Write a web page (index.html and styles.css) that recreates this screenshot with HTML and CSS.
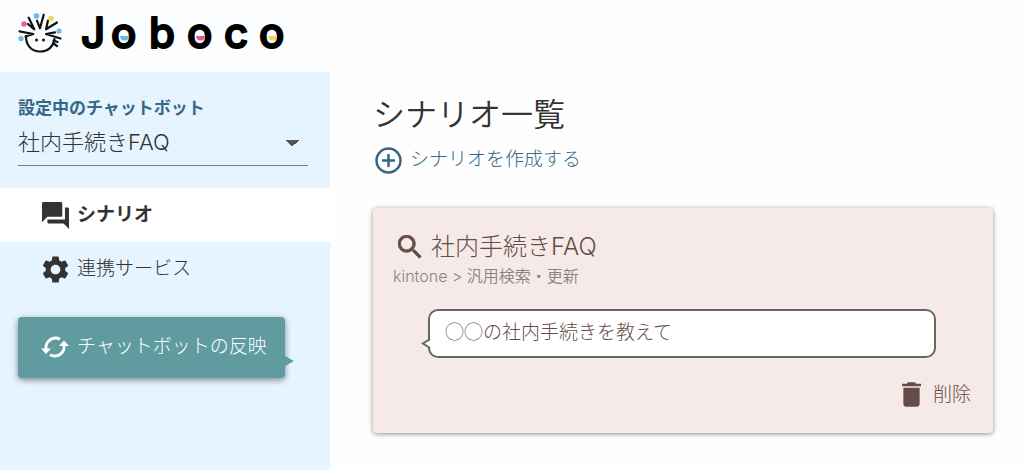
FILE: index.html
```
<!DOCTYPE html>
<html lang="ja">
<head>
<meta charset="UTF-8">
<meta name="viewport" content="width=device-width, initial-scale=1.0">
<title>シナリオ一覧 | Joboco</title>
<link rel="stylesheet" href="styles.css">
</head>
<body>
  <header class="header">
    <a href="#" class="logo" aria-label="Joboco">
      <svg class="logo-mark" viewBox="0 0 44 42" width="44" height="42" fill="none" stroke="#111" stroke-width="2.2" stroke-linecap="round" stroke-linejoin="round">
        <path d="M8 24C8 33 13 39.500 22 39.500c8 0 13-5 14.500-12.500"/>
        <path d="M1.500 19.300L15.300 22 7.500 24.500M10.700 5.700l5.600 11.600L10 12M19 8.700l3 7.600L25.700 2.700M30 8.500l-2 8.800 11-6.800M37 20.300L28 22l14.500 4.500M35.500 28.500l4 1.500M35.500 31.500l3.500 2.500"/>
        <g fill="#111" stroke="none"><circle cx="18.500" cy="28" r="1.500"/><circle cx="25.500" cy="28" r="1.500"/></g>
        <g stroke="none">
          <circle cx="18.500" cy="4" r="2.800" fill="#6ab9e6"/>
          <circle cx="33" cy="6.500" r="2.800" fill="#eedb60"/>
          <circle cx="6" cy="12" r="2.800" fill="#ec5c9f"/>
          <circle cx="41" cy="19" r="2.600" fill="#6ab9e6"/>
          <circle cx="3" cy="26.500" r="2.600" fill="#6ab9e6"/>
        </g>
      </svg>
      <svg class="logo-type" viewBox="0 0 220 48" width="220" height="48">
        <text class="logo-text" y="36" x="1 31 69 107 144 179">Joboco</text>
        <path d="M40 24h9a4.500 4.500 0 0 1-9 0z" fill="#6ab9e6"/>
        <path d="M116 24h9a4.500 4.500 0 0 1-9 0z" fill="#dc5c9b"/>
        <path d="M188 24h9a4.500 4.500 0 0 1-9 0z" fill="#e8d95c"/>
      </svg>
    </a>
  </header>

  <div class="layout">
    <aside class="sidebar">
      <div class="bot">
        <label class="bot-label" for="bot">設定中のチャットボット</label>
        <select class="bot-select" id="bot">
          <option>社内手続きFAQ</option>
        </select>
      </div>
      <nav class="menu">
        <a href="#" class="menu-item active">
          <svg viewBox="2 2 20 20" width="27" height="27" fill="currentColor"><path d="M21 6h-2v9H6v2c0 .55.45 1 1 1h11l4 4V7c0-.55-.45-1-1-1zm-4 6V3c0-.55-.45-1-1-1H3c-.55 0-1 .45-1 1v14l4-4h10c.55 0 1-.45 1-1z"/></svg>
          シナリオ
        </a>
        <a href="#" class="menu-item">
          <svg viewBox="2 2 20 20" width="27" height="27" fill="currentColor"><path d="M19.140 12.940c.04-.3.06-.61.06-.94 0-.32-.02-.64-.07-.94l2.030-1.580c.18-.14.23-.41.12-.61l-1.920-3.320c-.12-.22-.37-.29-.59-.22l-2.390.96c-.5-.38-1.030-.7-1.620-.94l-.36-2.540c-.04-.24-.24-.41-.48-.41h-3.840c-.24 0-.43.17-.47.41l-.36 2.540c-.59.24-1.130.57-1.620.94l-2.390-.96c-.22-.08-.47 0-.59.22L2.740 8.870c-.12.21-.08.47.12.61l2.030 1.580c-.05.3-.09.63-.09.94s.02.64.07.94l-2.030 1.580c-.18.14-.23.41-.12.61l1.920 3.320c.12.22.37.29.59.22l2.390-.96c.5.38 1.030.7 1.620.94l.36 2.540c.05.24.24.41.48.41h3.840c.24 0 .44-.17.47-.41l.36-2.540c.59-.24 1.130-.56 1.620-.94l2.390.96c.22.08.47 0 .59-.22l1.920-3.320c.12-.22.07-.47-.12-.61l-2.010-1.580zM12 15.600c-1.980 0-3.600-1.620-3.600-3.600s1.620-3.600 3.600-3.600 3.600 1.620 3.600 3.600-1.620 3.600-3.600 3.600z"/></svg>
          連携サービス
        </a>
      </nav>
      <button type="button" class="apply">
        <svg viewBox="0 0 28 24" width="28" height="24">
          <path d="M5 14.500C4 8 9 3 14.500 3c1.500 0 3 .4 4.500 1.200M23 10c1 6.500-4 11-9.500 11-1.500 0-3-.4-4.500-1.200" fill="none" stroke="currentColor" stroke-width="2.800"/>
          <path d="M0 13.500h10l-5 5.500zM18 11h10l-5-5.500z" fill="currentColor"/>
        </svg>
        チャットボットの反映
      </button>
    </aside>

    <main class="main">
      <h1 class="title">シナリオ一覧</h1>
      <a href="#" class="create">
        <svg viewBox="0 0 27 27" width="27" height="27" fill="none" stroke="currentColor" stroke-width="2.500"><circle cx="13.500" cy="13.500" r="12"/><path d="M13.500 7v13M7 13.500h13"/></svg>
        シナリオを作成する
      </a>

      <section class="card">
        <h2 class="card-title">
          <svg viewBox="3 3 18 18" width="24" height="24" fill="currentColor" stroke="currentColor" stroke-width=".5"><path d="M15.500 14h-.79l-.28-.27C15.410 12.590 16 11.110 16 9.500 16 5.910 13.090 3 9.500 3S3 5.910 3 9.500 5.910 16 9.500 16c1.610 0 3.090-.59 4.230-1.570l.27.28v.79l5 4.990L20.490 19l-4.990-5zm-6 0C7.010 14 5 11.990 5 9.500S7.010 5 9.500 5 14 7.010 14 9.500 11.990 14 9.500 14z"/></svg>
          社内手続きFAQ
        </h2>
        <p class="card-path">kintone &gt; 汎用検索・更新</p>
        <div class="bubble">
          ◯◯の社内手続きを教えて
          <svg class="bubble-tail" viewBox="0 0 10 12" width="10" height="12"><path d="M10 2v7H8L3 6l5-3z" fill="#fff"/><path d="M9 1L2 5.500 9 10" fill="none" stroke="#666" stroke-width="2"/></svg>
        </div>
        <button type="button" class="delete">
          <svg viewBox="5 3 14 18" width="19" height="25" fill="currentColor"><path d="M6 19c0 1.100.9 2 2 2h8c1.100 0 2-.9 2-2V7H6v12zM19 4h-3.500l-1-1h-5l-1 1H5v2h14V4z"/></svg>
          削除
        </button>
      </section>
    </main>
  </div>
</body>
</html>
```
FILE: styles.css
```
* {
  box-sizing: border-box;
}

body {
  margin: 0;
  min-height: 100vh;
  display: flex;
  flex-direction: column;
  font-family: Inter, "Noto Sans CJK JP", sans-serif;
  font-size: 19px;
  font-weight: 300;
  line-height: 28px;
  color: #333;
  background-color: #fefefe;
}

a {
  color: inherit;
  text-decoration: none;
}

button {
  font: inherit;
  border: none;
  cursor: pointer;
}

svg {
  flex-shrink: 0;
}

/* header */
.header {
  padding: 12px 18px;
  height: 72px;
  background-color: #fbfdff;
}

.logo {
  display: flex;
  gap: 18px;
}

.logo-type {
  overflow: visible;
}

.logo-text {
  font-family: Inter, sans-serif;
  font-size: 42px;
  font-weight: 500;
  fill: #000;
  stroke: #000;
  stroke-width: 2px;
  stroke-linejoin: round;
}

.layout {
  flex: 1;
  display: grid;
  grid-template-columns: 330px 1fr;
}

/* sidebar */
.sidebar {
  background-color: #e6f4ff;
}

.bot {
  padding: 22px 22px 22px 18px;
}

.bot-label {
  display: block;
  font-size: 17px;
  font-weight: bold;
  color: #356786;
}

.bot-select {
  display: block;
  width: 100%;
  height: 44px;
  padding: 0 0 4px;
  border: none;
  border-bottom: 1px solid #76817f;
  border-radius: 0;
  appearance: none;
  font: inherit;
  font-size: 22px;
  color: #333;
  /* two triangles make the down arrow */
  background: linear-gradient(to top right, transparent 50%, #555 50%) no-repeat right 16px top 18px / 7px 7px,
    linear-gradient(to top left, transparent 50%, #555 50%) no-repeat right 9px top 18px / 7px 7px;
}

.menu-item {
  display: flex;
  align-items: center;
  gap: 8px;
  height: 54px;
  padding-left: 42px;
}

.menu-item svg {
  color: #333;
}

.menu-item.active {
  font-weight: bold;
  background-color: #fff;
}

.apply {
  position: relative;
  display: flex;
  align-items: center;
  gap: 8px;
  margin: 21px 45px 0 18px;
  padding: 16px 18px 17px 23px;
  border-radius: 4px;
  color: #fff;
  white-space: nowrap;
  background-color: #5f9b9f;
  box-shadow: 0 2px 6px rgba(0, 0, 0, 0.45);
}

/* speech bubble tip */
.apply::after {
  content: "";
  position: absolute;
  left: 100%;
  bottom: 12px;
  border: solid transparent;
  border-width: 5px 0 5px 9px;
  border-left-color: #5f9b9f;
}

/* main */
.main {
  padding: 20px 31px 20px 43px;
}

.title {
  margin: 0;
  font-size: 32px;
  font-weight: 350;
  line-height: 46px;
}

.create {
  display: inline-flex;
  align-items: center;
  gap: 8px;
  margin: 8px 2px 0;
  color: #356786;
}

.card {
  display: flex;
  flex-direction: column;
  margin-top: 26px;
  padding: 22px 20px 24px;
  border-radius: 4px;
  color: #664c48;
  background-color: #f6eae9;
  box-shadow: 0 1px 5px rgba(0, 0, 0, 0.45);
}

.card-title {
  display: flex;
  align-items: center;
  gap: 9px;
  margin: 0;
  padding-left: 5px;
  font-size: 24px;
  font-weight: 300;
  line-height: 34px;
}

.card-path {
  margin: 0;
  font-size: 16px;
  font-weight: 350;
  line-height: 24px;
  color: #8b8180;
}

.bubble {
  position: relative;
  margin: 21px 37px 0 35px;
  padding: 6px 15px 11px;
  border: 2px solid #666;
  border-radius: 10px;
  font-family: "Noto Sans CJK JP", sans-serif;
  background-color: #fff;
}

.bubble-tail {
  position: absolute;
  left: -9px;
  bottom: 6px;
}

.delete {
  display: flex;
  align-items: center;
  align-self: flex-end;
  gap: 12px;
  margin-top: 23px;
  padding: 0 2px;
  color: #664c48;
  background: none;
}
```
